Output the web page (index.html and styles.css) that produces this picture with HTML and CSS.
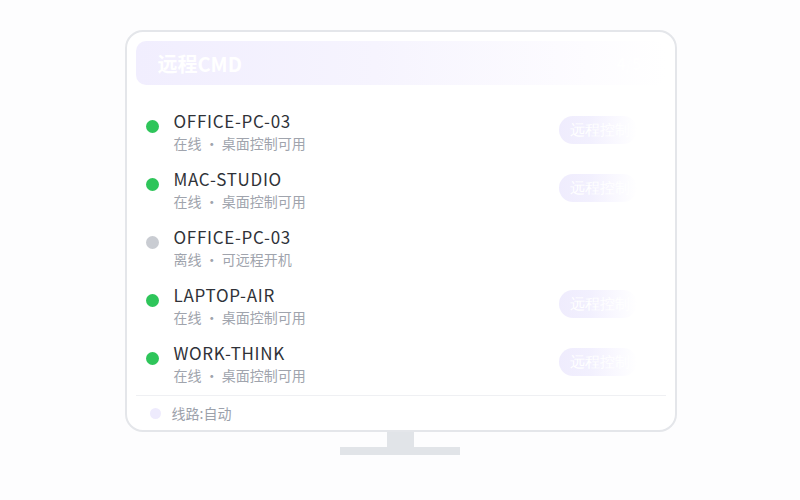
FILE: index.html
```html
<!DOCTYPE html>
<html lang="zh">
<head>
<meta charset="utf-8">
<link rel="stylesheet" href="styles.css">
</head>
<body>
<div class="stage">
  <div class="monitor">
    <div class="header">
      <span class="title">远程CMD</span>
      <span class="count">4/5</span>
    </div>
    <div class="list">
      <div class="row">
        <span class="dot on"></span>
        <div class="info"><div class="name">OFFICE-PC-03</div><div class="sub">在线 · 桌面控制可用</div></div>
        <span class="btn">远程控制</span>
      </div>
      <div class="row">
        <span class="dot on"></span>
        <div class="info"><div class="name">MAC-STUDIO</div><div class="sub">在线 · 桌面控制可用</div></div>
        <span class="btn">远程控制</span>
      </div>
      <div class="row">
        <span class="dot off"></span>
        <div class="info"><div class="name">OFFICE-PC-03</div><div class="sub">离线 · 可远程开机</div></div>
      </div>
      <div class="row">
        <span class="dot on"></span>
        <div class="info"><div class="name">LAPTOP-AIR</div><div class="sub">在线 · 桌面控制可用</div></div>
        <span class="btn">远程控制</span>
      </div>
      <div class="row">
        <span class="dot on"></span>
        <div class="info"><div class="name">WORK-THINK</div><div class="sub">在线 · 桌面控制可用</div></div>
        <span class="btn">远程控制</span>
      </div>
    </div>
    <div class="footer">
      <span class="fdot"></span>
      <span class="ftext">线路:自动</span>
    </div>
  </div>
  <div class="neck"></div>
  <div class="base"></div>
</div>
</body>
</html>
```
FILE: styles.css
```css
html, body {
  margin: 0;
  padding: 0;
  background: #fdfdfe;
  font-family: "Noto Sans CJK SC", "Noto Sans", sans-serif;
}
.stage {
  display: flex;
  flex-direction: column;
  align-items: center;
  padding-top: 30px;
  height: 500px;
  box-sizing: border-box;
}
.monitor {
  width: 552px;
  height: 402px;
  box-sizing: border-box;
  border: 2px solid #e4e6ea;
  border-radius: 18px;
  background: #ffffff;
  padding: 9px 9px 0 9px;
  display: flex;
  flex-direction: column;
  margin-left: 1px;
}
.header {
  height: 45px;
  border-radius: 10px;
  background: linear-gradient(90deg, #f1eefe 0%, #f6f4fe 45%, #fdfcff 85%, #ffffff 100%);
  display: flex;
  align-items: center;
  padding: 0 22px;
  justify-content: space-between;
}
.title {
  color: #ffffff;
  font-size: 20px;
  font-weight: 700;
}
.count {
  color: #ffffff;
  font-size: 16px;
  font-weight: 700;
  margin-right: 2px;
}
.list {
  margin-top: 25px;
  display: flex;
  flex-direction: column;
  gap: 14px;
}
.row {
  display: flex;
  align-items: flex-start;
  padding-left: 10px;
  height: 44px;
}
.dot {
  width: 13px;
  height: 13px;
  border-radius: 50%;
  margin-top: 10px;
  flex: none;
}
.dot.on { background: #2ec55a; }
.dot.off { background: #c9ccd2; }
.info {
  margin-left: 15px;
  flex: 1;
}
.name {
  font-size: 17px;
  line-height: 22px;
  color: #2f3238;
  letter-spacing: 0.7px;
}
.sub {
  font-size: 14px;
  line-height: 23px;
  color: #a0a4ad;
}
.btn {
  margin-top: 6px;
  margin-right: 29px;
  width: 78px;
  height: 28px;
  border-radius: 14px;
  box-sizing: border-box;
  padding-left: 11px;
  font-family: "Liberation Serif", serif;
  font-size: 15px;
  line-height: 28px;
  color: #ffffff;
  white-space: nowrap;
  overflow: hidden;
  background: linear-gradient(90deg, #efecfd 0%, #f2f0fe 40%, #faf9ff 75%, rgba(255,255,255,0) 100%);
}
.footer {
  margin-top: 9px;
  border-top: 1px solid #eff0f3;
  height: 34px;
  display: flex;
  align-items: center;
  padding-left: 14px;
}
.fdot {
  width: 11px;
  height: 11px;
  border-radius: 50%;
  background: #eeebfd;
  flex: none;
}
.ftext {
  margin-left: 11px;
  font-size: 14px;
  color: #9ca1ab;
}
.neck {
  width: 27px;
  height: 15px;
  background: #e1e4e8;
}
.base {
  width: 120px;
  height: 8px;
  background: #e1e4e8;
}
```
